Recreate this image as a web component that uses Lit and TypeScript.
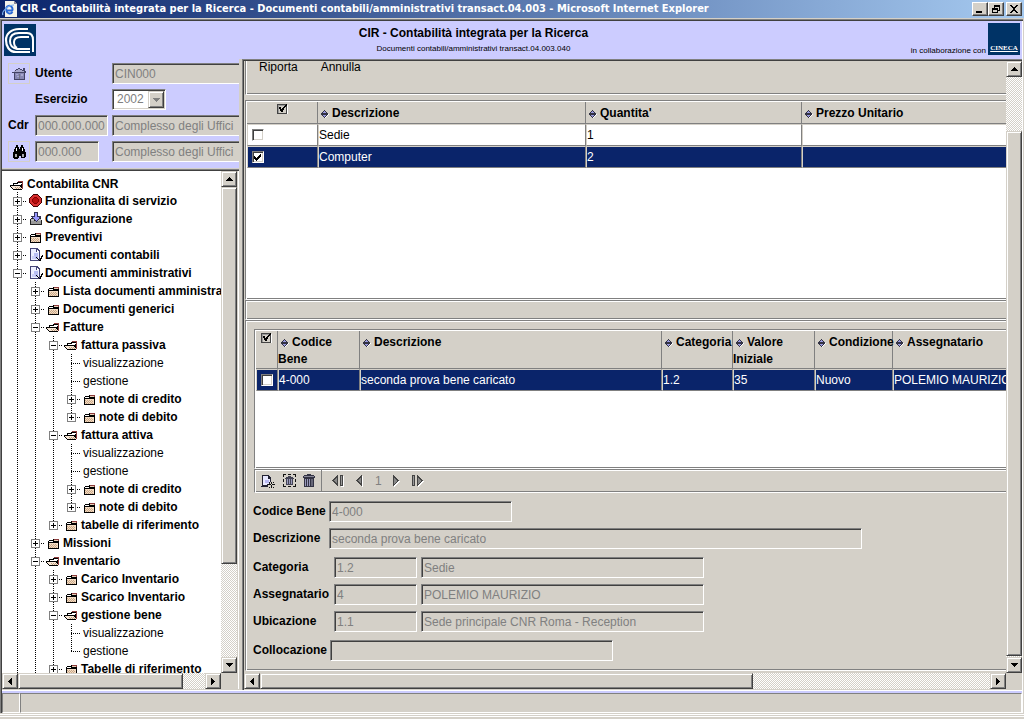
import { LitElement, html, svg, css, nothing, TemplateResult } from "lit";
import { customElement, state } from "lit/decorators.js";

interface TreeNode {
  label: string;
  icon?: string;
  open?: boolean;
  more?: boolean;
  children?: TreeNode[];
}

const leaf = (label: string): TreeNode => ({ label });
const folder = (label: string, children?: TreeNode[], extra: Partial<TreeNode> = {}): TreeNode => ({
  label,
  icon: "folder",
  open: !!children,
  children: children ?? [],
  ...extra,
});
const fattura = (label: string) =>
  folder(label, [leaf("visualizzazione"), leaf("gestione"), folder("note di credito"), folder("note di debito")]);

const TREE: TreeNode[] = [
  folder("Funzionalita di servizio", undefined, { icon: "stop" }),
  folder("Configurazione", undefined, { icon: "config" }),
  folder("Preventivi"),
  folder("Documenti contabili", undefined, { icon: "doc" }),
  folder(
    "Documenti amministrativi",
    [
      folder("Lista documenti amministrativi"),
      folder("Documenti generici"),
      folder("Fatture", [fattura("fattura passiva"), fattura("fattura attiva"), folder("tabelle di riferimento")]),
      folder("Missioni"),
      folder(
        "Inventario",
        [
          folder("Carico Inventario"),
          folder("Scarico Inventario"),
          folder("gestione bene", [leaf("visualizzazione"), leaf("gestione")]),
          folder("Tabelle di riferimento", undefined, { more: true }),
        ],
        { more: true }
      ),
    ],
    { icon: "doc", more: true }
  ),
];

const icon = (w: number, h: number, body: unknown, cls = "") =>
  html`<svg class="icon ${cls}" width=${w} height=${h} viewBox="0 0 ${w} ${h}" shape-rendering="crispEdges" aria-hidden="true">${body}</svg>`;

const ICONS: Record<string, TemplateResult> = {
  folder: icon(16, 14, svg`
    <path d="M7 3h6v2H7z" fill="#8c3c3c"/><path d="M3 4h4v-1h1v1h4v1H3z" fill="#000"/>
    <path d="M2 5h11v8H2z" fill="#000"/><path d="M3 5h4v1H3z" fill="#fff"/><path d="M8 4h4v1H8z" fill="#e8d0b8"/>
    <path d="M3 7h9v5H3z" fill="#f4dcc4"/>
    <path d="M3 8h1v1H3zM5 8h1v1H5zM7 8h1v1H7zM9 8h1v1H9zM4 9h1v1H4zM6 9h1v1H6zM8 9h1v1H8zM10 9h1v1h-1zM3 10h1v1H3zM5 10h1v1H5zM7 10h1v1H7zM9 10h1v1H9zM4 11h1v1H4zM6 11h1v1H6zM8 11h1v1H8zM10 11h1v1h-1z" fill="#c8a888"/>`),
  folderOpen: icon(16, 14, svg`
    <path d="M8 3h5v1H8zM12 4h1v7h-1z" fill="#8c3c3c"/><path d="M3 5h4V4h5v8H3v-1H2v-1H1V9H0V7h3z" fill="#000"/>
    <path d="M4 6h4V5h4v1h-1v1H4z" fill="#fff"/><path d="M1 8h9v1h1v1h1v1H3v-1H2V9H1z" fill="#f8e8d8"/>
    <path d="M5 9h1v1H5zM7 9h1v1H7zM9 9h1v1H9zM6 10h1v1H6zM8 10h1v1H8zM10 10h1v1h-1z" fill="#c0a080"/>`),
  stop: icon(16, 14, svg`
    <path d="M5 0h5v1h1v1h1v1h1v1h1v5h-1v1h-1v1h-1v1h-1v1H5v-1H4v-1H3v-1H2V9H1V4h1V3h1V2h1V1h1z" fill="#400"/>
    <path d="M5 1h5v1h1v1h1v1h1v5h-1v1h-1v1h-1v1H5v-1H4v-1H3V9H2V4h1V3h1V2h1z" fill="#d83030"/>
    <path d="M6 3h3v1h1v1h1v3h-1v1H9v1H6V9H5V8H4V5h1V4h1z" fill="#800"/><path d="M6 4h3v1h1v3H9v1H6V8H5V5h1z" fill="#b80c0c"/>`),
  config: icon(16, 14, svg`
    <path d="M3 6h10l1 3v4H2V9z" fill="#222"/><path d="M3 9h10v3H3z" fill="#999"/><path d="M3 7h3v2H3zM10 7h3v2h-3z" fill="#bbb"/>
    <path d="M6 0h4v4h3v1l-5 5-5-5V4h3z" fill="#335"/><path d="M7 1h2v4h2v1L8 9 5 6V5h2z" fill="#99f"/>`),
  doc: icon(16, 14, svg`
    <path d="M2 0h7l3 3v10H2z" fill="#447"/><path d="M3 1h5v3h3v8H3z" fill="#eceeff"/><path d="M6 5h4v6H6z" fill="#b8bef4"/><path d="M4 8h3v3H4z" fill="#ccd0fa"/>
    <path d="M9 2h1v1h1v1H9z" fill="#fff"/><path d="M8 9h1v1h1v1h1v1h1v-2h1V8h1V7h1v2h-1v2h-1v2h-2v-1h-1v-1H9v-1H8z" fill="#000"/>`),
  home: icon(15, 12, svg`
    <path d="M6 0h2v1h2v1h1V0h2v3h1v2h-1v7H2V5H0V4h2V3h1V2h1V1h2z" fill="#446"/>
    <path d="M6 1h2v1h2v1h2v1H2V3h2V2h2z" fill="#a8a8cc"/><path d="M3 5h9v6H3z" fill="#8888b4"/>
    <path d="M4 6h2v1H4zM9 6h2v2H9zM5 8h2v1H5z" fill="#a8a8d0"/><path d="M7 6h1v5H7z" fill="#778"/>`),
  binocular: icon(15, 14, svg`
    <path d="M4 0h2v2h1v2h1V2h1V0h2v2h1v2h1v3h1v5h-1v1h-4v-2H7v2H6v1H2v-1H1V7h1V4h1V2h1z" fill="#000"/>
    <path d="M4 3h1v3H4zM10 3h1v3h-1z" fill="#fff"/><path d="M3 9h2v3H3zM10 9h2v3h-2z" fill="#aaa"/>`),
  sort: icon(8, 8, svg`
    <path d="M3 0h1v1h1v1h1v1h1v2H6v1H5v1H4v1H3V7H2V6H1V5H0V3h1V2h1V1h1z" fill="#334"/>
    <path d="M3 1h1v1h1v1H2V2h1zM2 5h3v1H4v1H3V6H2z" fill="#9a9ae0"/><path d="M7 4h1v1H7zM6 5h1v1H6zM5 6h1v1H5zM4 7h1v1H4z" fill="#fff"/>`, "sort"),
  check: icon(11, 10, svg`
    <path d="M0 0h10v10H0z" fill="#444"/><path d="M1 1h8v8H1z" fill="#999"/><path d="M2 2h7v7H2z" fill="#d4d0c8"/><path d="M10 1h1v9h-1z" fill="#fff"/>
    <path d="M2 3h2v2h1V4h1V3h1V2h1V1h1V0h1v2H9v1H8v1H7v2H6v2H4V7H3V5H2z" fill="#000"/>`),
  newdoc: icon(15, 15, svg`
    <path d="M1 1h7l2 3v4H9v2H7v2H1z" fill="#223"/><path d="M2 2h5v3h2v3H8v2H6v1H2z" fill="#e8e8ff"/><path d="M4 6h4v3H4z" fill="#b8b8f0"/><path d="M0 12h7v1H0z" fill="#223"/>
    <path d="M10 8h1v6h-1zM7 11h7v-1H7zM8 8h1v1H8zM12 8h1v1h-1zM8 13h1v1H8zM12 13h1v1h-1z" fill="#111"/>`),
  deleteAll: icon(15, 14, svg`
    <path d="M1 0h3v1H2v2H1zM6 0h3v1H6zM11 0h3v3h-1V1h-2zM1 5h1v3H1zM13 5h1v3h-1zM1 10h1v2h2v1H1zM6 12h3v1H6zM11 12h2v-2h1v3h-3z" fill="#111"/>
    <path d="M6 2h3v1h2v1h1v1h-1v6H4V5H3V4h1V3h2z" fill="#445"/><path d="M5 5h1v5H5zM7 5h1v5H7zM9 5h1v5H9z" fill="#99b"/>`),
  trash: icon(13, 14, svg`
    <path d="M4 0h4v1h3v1h1v2h-1v9H1V4H0V2h1V1h3z" fill="#334"/><path d="M1 2h10v1H1z" fill="#889"/>
    <path d="M2 5h1v7H2zM4 5h1v7H4zM6 5h1v7H6z" fill="#99b"/><path d="M8 5h2v7H8z" fill="#667"/>`),
  first: icon(13, 12, svg`<path d="M6 0v11L0 6V5z" fill="#444"/><path d="M5 3v6L2 6V5z" fill="#888"/><path d="M8 0h3v11H8z" fill="#444"/><path d="M9 1h1v9H9z" fill="#999"/><path d="M11 1h1v11H9v-1h2z" fill="#fff"/>`),
  prev: icon(8, 12, svg`<path d="M6 0v11L0 6V5z" fill="#444"/><path d="M5 3v6L2 6V5z" fill="#888"/><path d="M6 1h1v11H6z" fill="#fff"/>`),
  next: icon(8, 12, svg`<path d="M1 1v11l6-5.500z" fill="#fff"/><path d="M0 0v11l6-5V5z" fill="#444"/><path d="M1 3v6l3-3V5z" fill="#888"/>`),
  last: icon(13, 12, svg`<path d="M0 0h3v11H0z" fill="#444"/><path d="M1 1h1v9H1z" fill="#999"/><path d="M6 1v11l6-5.500z" fill="#fff"/><path d="M5 0v11l6-5V5z" fill="#444"/><path d="M6 3v6l3-3V5z" fill="#888"/>`),
  ie: icon(16, 16, svg`
    <path d="M3 0h9l3 3v13H3z" fill="#f4f4ec"/><path d="M12 0l3 3h-3z" fill="#889"/>
    <g shape-rendering="auto"><path d="M11 9.500H4.500a3.200 3.200 0 1 1 6 -1.500v1.500M10.500 11a3.300 3.300 0 0 1-6-1" fill="none" stroke="#2a6ad8" stroke-width="2"/>
    <path d="M1 14C-1 11 6 4 12 4" fill="none" stroke="#7ab0f0" stroke-width="1.200"/></g>`),
  min: icon(8, 8, svg`<path d="M0 6h6v2H0z"/>`),
  restore: icon(8, 8, svg`<path d="M2 0h6v6H6v2H0V3h2zM3 2v1h3v2h1V2zM1 5v2h4V5z" fill-rule="evenodd"/>`),
  close: icon(8, 8, svg`<path d="M0 0h2v1h1v1h2V1h1V0h2v1H7v1H6v1H5v2h1v1h1v1h1v1H6V7H5V6H3v1H2v1H0V7h1V6h1V5h1V3H2V2H1V1H0z"/>`),
  up: icon(7, 4, svg`<path d="M3 0h1v1h1v1h1v1h1v1H0V3h1V2h1V1h1z"/>`),
  down: icon(7, 4, svg`<path d="M0 0h7v1H6v1H5v1H4v1H3V3H2V2H1V1H0z"/>`),
  left: icon(4, 7, svg`<path d="M4 0v7H3V6H2V5H1V4H0V3h1V2h1V1h1V0z"/>`),
  right: icon(4, 7, svg`<path d="M0 0h1v1h1v1h1v1h1v1H3v1H2v1H1v1H0z"/>`),
  arrow: icon(7, 4, svg`<path d="M0 0h7v1H6v1H5v1H4v1H3V3H2V2H1V1H0z" fill="#808080"/>`),
};

const base = css`
  *, *::before, *::after { box-sizing: border-box; }
  .icon { display: block; flex: none; }
  button { font: inherit; color: inherit; margin: 0; padding: 0; }
  .raised {
    display: grid; place-items: center; flex: none;
    background: #d4d0c8; border: 1px solid; border-color: #d4d0c8 #404040 #404040 #d4d0c8;
    box-shadow: inset 1px 1px #fff, inset -1px -1px #808080;
  }
`;

/** A classic scroll bar; the weights give the share of track, thumb and track. */
@customElement("scroll-bar")
export class ScrollBar extends LitElement {
  static properties = { vertical: { type: Boolean, reflect: true }, before: { type: Number }, thumb: { type: Number }, after: { type: Number } };
  declare vertical: boolean;
  declare before: number;
  declare thumb: number;
  declare after: number;
  static styles = [base, css`
    :host { display: flex; height: 16px; min-width: 0; background: repeating-conic-gradient(#fff 0 25%, #d4d0c8 0 50%) 0 0 / 2px 2px; }
    :host([vertical]) { flex-direction: column; width: 16px; height: auto; min-height: 0; }
    .btn { width: 16px; height: 16px; }
    .part { min-width: 0; min-height: 0; }
  `];
  render() {
    const part = (n: number, cls: string) => html`<div class="part ${cls}" style="flex:${n} 1 0px"></div>`;
    return html`
      <button class="btn raised" aria-label=${this.vertical ? "Su" : "Sinistra"}>${this.vertical ? ICONS.up : ICONS.left}</button>
      ${this.before ? part(this.before, "") : nothing}
      ${part(this.thumb, "raised")}
      ${this.after ? part(this.after, "") : nothing}
      <button class="btn raised" aria-label=${this.vertical ? "Giu" : "Destra"}>${this.vertical ? ICONS.down : ICONS.right}</button>`;
  }
}

@customElement("nav-tree")
export class NavTree extends LitElement {
  @state() private closed = new Set<TreeNode>();
  static styles = [base, css`
    :host { display: block; overflow: hidden; background: #fff; min-width: 0; min-height: 0; }
    ul { list-style: none; margin: 0; padding: 6px 0 0 6px; font-size: 12px; white-space: nowrap; }
    li { display: flex; align-items: center; height: 18px; font-weight: bold; }
    li.root { height: 15px; padding-left: 2px; }
    li.leaf { font-weight: normal; }
    .cell { position: relative; width: 18px; height: 18px; flex: none; display: grid; place-items: center; }
    .line::before, .line::after, .horiz { content: ""; position: absolute; left: 9px; width: 1px; }
    .line::before { top: 0; height: 10px; background: repeating-linear-gradient(#000 0 1px, transparent 1px 2px); }
    .through::after { top: 10px; bottom: 0; background: repeating-linear-gradient(#000 0 1px, transparent 1px 2px); }
    .horiz { top: 9px; width: 10px; height: 1px; background: repeating-linear-gradient(90deg, #000 0 1px, transparent 1px 2px); }
    .toggle { position: relative; z-index: 1; width: 9px; height: 9px; border: 1px solid #808080; background: #fff; display: grid; place-items: center; }
    .pic { margin: 0 1px 0 2px; }
    a { color: #000; text-decoration: none; }
    .leaf a { padding-left: 3px; }
    .root a { padding-left: 1px; }
  `];
  private toggle(n: TreeNode) {
    const next = new Set(this.closed);
    next.has(n) ? next.delete(n) : next.add(n);
    this.closed = next;
  }
  private rows(nodes: TreeNode[], guides: boolean[]): unknown {
    return nodes.map((n, i) => {
      const more = i < nodes.length - 1 || !!n.more;
      const branch = !!n.children;
      const open = !!n.open && !this.closed.has(n);
      const pic = n.icon === "folder" && open ? "folderOpen" : n.icon;
      return html`
        <li class=${branch ? "" : "leaf"}>
          ${guides.map((g) => html`<span class="cell ${g ? "line through" : ""}"></span>`)}
          <span class="cell line ${more ? "through" : ""}">
            <span class="horiz"></span>
            ${branch
              ? html`<button class="toggle" aria-label=${`${open ? "Chiudi" : "Apri"} ${n.label}`} @click=${() => this.toggle(n)}>
                  ${icon(7, 7, svg`<path d=${open ? "M1 3h5v1H1z" : "M1 3h5v1H1zM3 1h1v5H3z"}/>`)}
                </button>`
              : nothing}
          </span>
          ${pic ? html`<span class="pic">${ICONS[pic]}</span>` : nothing}
          <a href="#">${n.label}</a>
        </li>
        ${branch && open ? this.rows(n.children!, [...guides, more]) : nothing}`;
    });
  }
  render() {
    return html`<ul>
      <li class="root">${ICONS.folderOpen}<a href="#">Contabilita CNR</a></li>
      ${this.rows(TREE, [])}
    </ul>`;
  }
}

@customElement("app-root")
export class AppRoot extends LitElement {
  static styles = [base, css`
    :host { display: flex; flex-direction: column; height: 100vh; overflow: hidden; background: #d4d0c8; color: #000; font: 12px/15px "Liberation Sans", Arial, sans-serif; }
    .titlebar { display: flex; align-items: center; height: 18px; flex: none; margin-bottom: 1px; padding: 0 2px; gap: 2px; background: linear-gradient(90deg, #0a246a, #a6caf0); color: #fff; }
    .titlebar h1 { flex: 1; margin: 0; font: bold 11px/16px "DejaVu Sans Condensed", "DejaVu Sans", sans-serif; white-space: nowrap; overflow: hidden; }
    .winbtns { display: flex; color: #000; }
    .winbtns button { width: 16px; height: 14px; border-color: #fff #404040 #404040 #fff; box-shadow: inset -1px -1px #808080; }
    .winbtns button:last-child { margin-left: 2px; }
    .frame { flex: 1; min-height: 0; display: flex; flex-direction: column; margin-right: 1px; border: solid #808080; border-width: 1px 0 0 1px; box-shadow: inset 1px 1px #404040, inset -1px 0 #fff; padding: 1px 1px 0 1px; }
    .banner { display: flex; align-items: center; height: 38px; flex: none; padding: 0 2px; background: #ccccff; }
    .cnr { width: 32px; height: 32px; }
    .heading { flex: 1; text-align: center; }
    .heading h2 { margin: 0; font-size: 12px; line-height: 18px; }
    .heading p { margin: 0; }
    .tiny { font-size: 8px; line-height: 14px; }
    .partner { display: flex; align-items: flex-end; gap: 2px; }
    .cineca { width: 32px; height: 32px; background: #003366; color: #fff; display: flex; align-items: flex-end; justify-content: center; font: bold 7px/10px "Liberation Serif", serif; text-decoration: underline; padding-bottom: 2px; margin-bottom: 3px; }
    .panes { flex: 1; min-height: 0; display: grid; grid-template-columns: 237px minmax(0, 1fr); column-gap: 3px; border-bottom: 1px solid #fff; }
    .side { display: flex; flex-direction: column; min-height: 0; min-width: 0; }
    .who { flex: none; display: grid; grid-template-columns: 27px 73px minmax(0, 1fr); grid-auto-rows: 21px; row-gap: 5px; align-items: center; padding: 4px 0 6px 6px; background: #ccccff; overflow: hidden; }
    .who .wide { margin-left: 4px; width: calc(100% - 2px); }
    .who .short { width: 64px; }
    .who .year { margin-left: 4px; }
    .iconbtn { width: 22px; height: 21px; display: grid; place-items: center; background: none; border: 1px solid #d4d0c8; }
    label, .strong { font-weight: bold; white-space: nowrap; }
    .field { display: block; width: 100%; min-width: 0; height: 21px; margin: 0; padding: 0 2px; border: 1px solid; border-color: #808080 #fff #fff #808080; border-radius: 0; background: #d4d0c8; color: #808080; font: inherit; box-shadow: inset 1px 1px #404040, inset -1px -1px #d4d0c8; opacity: 1; }
    .picker { position: relative; display: block; width: 54px; height: 21px; }
    .picker select { appearance: none; background: #fff; width: 54px; height: 21px; padding-left: 4px; }
    .picker .raised { position: absolute; right: 2px; top: 2px; width: 16px; height: 17px; pointer-events: none; }
    .treebox { flex: 1; min-height: 0; display: grid; grid-template: minmax(0, 1fr) 16px / minmax(0, 1fr) 16px; border: solid #404040; border-width: 1px 0 0; margin: 2px 0 1px; box-shadow: 0 -1px #808080; padding-right: 2px; background: linear-gradient(#fff, #fff) right / 1px 100% no-repeat; }
    .main { display: grid; grid-template: minmax(0, 1fr) 16px / minmax(0, 1fr) 16px; min-height: 0; border: solid #808080; border-width: 1px 0 0 1px; box-shadow: inset 1px 1px #404040; padding: 1px 0 1px 1px; }
    .work { overflow: hidden; min-width: 0; min-height: 0; padding-left: 1px; }
    .menu { display: flex; align-items: flex-start; gap: 23px; height: 34px; padding-left: 13px; border-left: 1px solid #808080; border-bottom: 1px solid #fff; box-shadow: inset 1px 0 #fff, inset 0 -1px #808080; margin-bottom: 5px; }
    .menu button { background: none; border: 0; line-height: 13px; }
    .etched { border: 1px solid #808080; border-right: 0; border-bottom-color: #fff; box-shadow: inset 1px 1px #fff, inset 0 -1px #808080; }
    .grid1 { height: 200px; padding: 1px 0 1px 1px; }
    .grid2 { height: 140px; padding: 1px 0 1px 1px; }
    .sheet { height: 100%; background: #fff; overflow: hidden; }
    .strip { height: 20px; }
    .detail { height: 351px; padding: 8px 0 0 8px; }
    table { width: 100%; table-layout: fixed; border-collapse: separate; border-spacing: 0; }
    th { height: 22px; padding: 3px 0 0; background: #d4d0c8; text-align: left; vertical-align: top; line-height: 17px; border: solid #808080; border-width: 0 1px 1px 0; white-space: nowrap; }
    th .icon { display: inline-block; }
    th .sort { margin: 0 3px; vertical-align: -1px; }
    th.tick { text-align: center; line-height: 10px; padding: 2px 0 0; }
    .tall th { height: 36px; }
    td { height: 22px; padding: 0; border: 1px solid; border-color: #d4d0c8 #808080 #808080 #d4d0c8; white-space: nowrap; }
    th:last-child, td:last-child { border-right: 0; }
    tr.sel td { background: #0a246a; color: #fff; }
    td input { appearance: none; display: block; width: 12px; height: 12px; margin: 0 0 0 4px; background: #fff; border: 1px solid; border-color: #808080 #fff #fff #808080; box-shadow: inset 1px 1px #404040, inset -1px -1px #d4d0c8; }
    .box { display: grid; width: max-content; }
    .box > * { grid-area: 1 / 1; }
    .box .mark { margin: 3px 0 0 6px; z-index: 1; pointer-events: none; color: #000; }
    .tools { display: flex; align-items: center; height: 24px; padding-left: 6px; }
    .tools button { background: none; border: 0; display: grid; place-items: center; }
    .edit { display: flex; gap: 6px; height: 100%; align-items: center; padding-right: 5px; border-right: 1px solid #808080; }
    .nav { display: flex; align-items: center; gap: 11px; padding-left: 10px; color: #808080; }
    .form { display: grid; gap: 6px; align-items: center; padding-top: 8px; width: 609px; max-width: 100%; margin-left: -1px; }
    .f1 { grid-template-columns: 70px minmax(0, 533px); }
    .f2 { grid-template-columns: 77px minmax(0, 83px) minmax(0, 283px); column-gap: 4px; }
    .f2 label { margin-right: -4px; }
    .f3 { grid-template-columns: 71px minmax(0, 283px); }
    .code { width: 183px; }
    .status { flex: none; display: flex; height: 22px; border-top: 2px solid #ccccff; }
    .status div { border: 1px solid; border-color: #808080 #fff #fff #808080; width: 18px; }
    .status .msg { flex: 1; }
    .foot { flex: none; height: 5px; margin-top: 1px; border: solid #fff; border-width: 1px 0 0; box-shadow: inset 0 1px #d4d0c8, inset 0 2px #fff; }
  `];

  private head(label: string) {
    return html`<th scope="col">${ICONS.sort}${label}</th>`;
  }

  private row(cells: string[], opts: { selected?: boolean; checked?: boolean } = {}) {
    return html`<tr class=${opts.selected ? "sel" : ""}>
      <td><span class="box"><input type="checkbox" aria-label=${`Seleziona ${cells[0]}`} .checked=${!!opts.checked} />
        ${opts.checked ? html`<span class="mark">${icon(8, 7, svg`<path d="M0 2h1v1h1v1h1V3h1V2h1V1h1V0h1v3H6v1H5v1H4v1H3v1H2V6H1V5H0z"/>`)}</span>` : nothing}</span></td>
      ${cells.map((c) => html`<td>${c}</td>`)}
    </tr>`;
  }

  render() {
    return html`
      <header class="titlebar">
        ${ICONS.ie}
        <h1>CIR - Contabilità integrata per la Ricerca - Documenti contabili/amministrativi transact.04.003 - Microsoft Internet Explorer</h1>
        <div class="winbtns">
          <button class="raised" aria-label="Riduci a icona">${ICONS.min}</button>
          <button class="raised" aria-label="Ripristina">${ICONS.restore}</button>
          <button class="raised" aria-label="Chiudi">${ICONS.close}</button>
        </div>
      </header>
      <div class="frame">
        <div class="banner">
          <svg class="cnr" viewBox="0 0 32 32" aria-label="CNR">
            <rect width="32" height="32" fill="#003366"/>
            <g fill="none" stroke="#fff">
              <path d="M24 5H15C7 5 2 10 2 16s3 12 10 12h14" stroke-width="2.200"/>
              <path d="M29 28V16c0-5-2-7-6-7h-8C9 9 6 12 6 17c0 4 2 7 7 8h13" stroke-width="2"/>
              <path d="M25 13h-8c-5 0-7 2-7 5s1 5 3 6" stroke-width="2"/>
            </g>
          </svg>
          <div class="heading">
            <h2>CIR - Contabilità integrata per la Ricerca</h2>
            <p class="tiny">Documenti contabili/amministrativi transact.04.003.040</p>
          </div>
          <div class="partner"><span class="tiny">in collaborazione con</span><span class="cineca">CINECA</span></div>
        </div>
        <div class="panes">
          <div class="side">
            <form class="who">
              <button type="button" class="iconbtn" aria-label="Home">${ICONS.home}</button>
              <label for="utente">Utente</label>
              <input class="field wide" id="utente" value="CIN000" disabled />
              <span></span>
              <label for="esercizio">Esercizio</label>
              <span class="picker year">
                <select class="field" id="esercizio" disabled><option>2002</option></select>
                <span class="raised">${ICONS.arrow}</span>
              </span>
              <label for="cdr">Cdr</label>
              <input class="field" id="cdr" value="000.000.000" disabled />
              <input class="field wide" aria-label="Descrizione Cdr" value="Complesso degli Uffici" disabled />
              <button type="button" class="iconbtn" aria-label="Cerca">${ICONS.binocular}</button>
              <input class="field short" aria-label="Unita" value="000.000" disabled />
              <input class="field wide" aria-label="Descrizione unita" value="Complesso degli Uffici" disabled />
            </form>
            <div class="treebox">
              <nav-tree></nav-tree>
              <scroll-bar vertical .before=${0} .thumb=${377} .after=${93}></scroll-bar>
              <scroll-bar .before=${0} .thumb=${165} .after=${22}></scroll-bar>
            </div>
          </div>
          <div class="main">
            <div class="work">
              <div class="menu"><button>Riporta</button><button>Annulla</button></div>
              <div class="grid1 etched"><div class="sheet">
                <table>
                  <colgroup><col width="71" /><col width="268" /><col width="216" /><col /></colgroup>
                  <thead><tr><th class="tick">${ICONS.check}</th>${this.head("Descrizione")}${this.head("Quantita'")}${this.head("Prezzo Unitario")}</tr></thead>
                  <tbody>
                    ${this.row(["Sedie", "1", ""])}
                    ${this.row(["Computer", "2", ""], { selected: true, checked: true })}
                  </tbody>
                </table>
              </div></div>
              <div class="strip etched"></div>
              <div class="detail etched">
                <div class="grid2 etched"><div class="sheet">
                  <table>
                    <colgroup><col width="22" /><col width="82" /><col width="302" /><col width="71" /><col width="82" /><col width="78" /><col /></colgroup>
                    <thead><tr class="tall"><th class="tick">${ICONS.check}</th>
                      <th scope="col">${ICONS.sort}Codice<br />Bene</th>${this.head("Descrizione")}${this.head("Categoria")}
                      <th scope="col">${ICONS.sort}Valore<br />Iniziale</th>${this.head("Condizione")}${this.head("Assegnatario")}</tr></thead>
                    <tbody>${this.row(["4-000", "seconda prova bene caricato", "1.2", "35", "Nuovo", "POLEMIO MAURIZIO"], { selected: true })}</tbody>
                  </table>
                </div></div>
                <div class="tools etched">
                  <div class="edit">
                    <button aria-label="Nuovo">${ICONS.newdoc}</button>
                    <button aria-label="Elimina tutti">${ICONS.deleteAll}</button>
                    <button aria-label="Elimina">${ICONS.trash}</button>
                  </div>
                  <div class="nav">
                    <button aria-label="Prima pagina">${ICONS.first}</button>
                    <button aria-label="Pagina precedente">${ICONS.prev}</button>
                    <span>1</span>
                    <button aria-label="Pagina successiva">${ICONS.next}</button>
                    <button aria-label="Ultima pagina">${ICONS.last}</button>
                  </div>
                </div>
                <div class="form f1">
                  <label for="codice">Codice Bene</label><input class="field code" id="codice" value="4-000" disabled />
                  <label for="descr">Descrizione</label><input class="field" id="descr" value="seconda prova bene caricato" disabled />
                </div>
                <div class="form f2">
                  <label for="cat">Categoria</label><input class="field" id="cat" value="1.2" disabled /><input class="field" aria-label="Descrizione categoria" value="Sedie" disabled />
                  <label for="ass">Assegnatario</label><input class="field" id="ass" value="4" disabled /><input class="field" aria-label="Nome assegnatario" value="POLEMIO MAURIZIO" disabled />
                  <label for="ubi">Ubicazione</label><input class="field" id="ubi" value="1.1" disabled /><input class="field" aria-label="Descrizione ubicazione" value="Sede principale CNR Roma - Reception" disabled />
                </div>
                <div class="form f3"><label for="coll">Collocazione</label><input class="field" id="coll" disabled /></div>
              </div>
            </div>
            <scroll-bar vertical .before=${54} .thumb=${525} .after=${1}></scroll-bar>
            <scroll-bar .before=${0} .thumb=${492} .after=${238}></scroll-bar>
          </div>
        </div>
        <div class="status"><div></div><div class="msg"></div></div>
      </div>
      <div class="foot"></div>`;
  }
}
